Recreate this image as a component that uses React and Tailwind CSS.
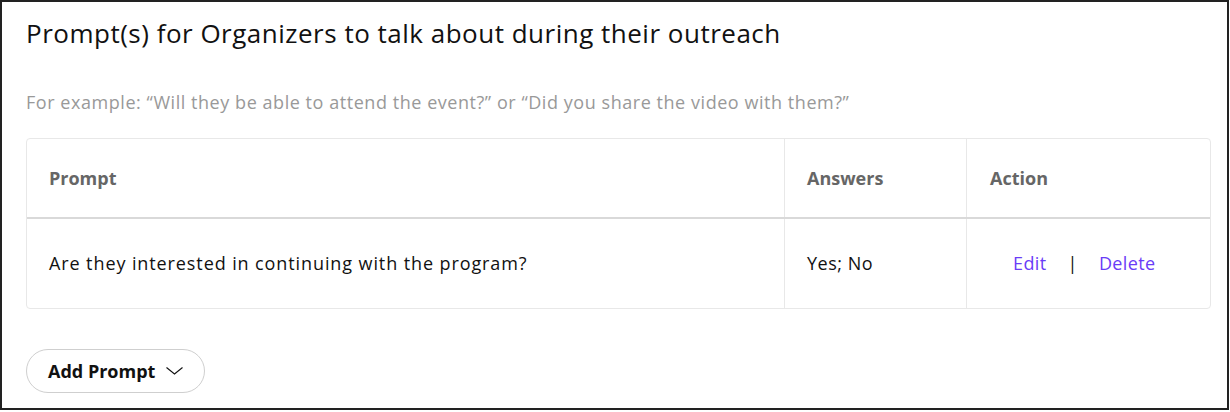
const rows = [
  { prompt: 'Are they interested in continuing with the program?', answers: 'Yes; No' },
];

export default function App() {
  return (
    <div
      className="w-[1229px] h-[410px] border-2 border-[#222] bg-white px-6 text-black"
      style={{ fontFamily: '"Open Sans", "Noto Sans", sans-serif' }}
    >
      <h1 className="pt-[13px] text-[26px] leading-[36px] tracking-[0.5px] font-normal text-[#111]">
        Prompt(s) for Organizers to talk about during their outreach
      </h1>
      <p className="mt-[39px] text-[18px] leading-[24px] tracking-[0.55px] text-[#999]">
        For example: “Will they be able to attend the event?” or “Did you share the video with them?”
      </p>

      <div className="mt-[24px] w-[1185px] rounded border border-[#e8e8e8]">
        <div className="grid grid-cols-[758px_182px_1fr] h-[80px] border-b-2 border-[#d9d9d9] text-[18px] font-bold text-[#666]">
          <div className="flex items-center px-[22px] border-r border-[#e8e8e8]">Prompt</div>
          <div className="flex items-center px-[22px] border-r border-[#e8e8e8]">Answers</div>
          <div className="flex items-center px-[23px]">Action</div>
        </div>
        {rows.map((r) => (
          <div
            key={r.prompt}
            className="grid grid-cols-[758px_182px_1fr] h-[89px] text-[18px] tracking-[0.9px] text-[#111]"
          >
            <div className="flex items-center px-[22px] border-r border-[#e8e8e8]">{r.prompt}</div>
            <div className="flex items-center px-[22px] tracking-[0.5px] border-r border-[#e8e8e8]">{r.answers}</div>
            <div className="flex items-center pl-[46px] tracking-[0.4px] text-[#6a3cf7]">
              <span>Edit</span>
              <span className="mx-[21px] text-[#111]">|</span>
              <span>Delete</span>
            </div>
          </div>
        ))}
      </div>

      <button className="mt-[40px] flex h-[44px] items-center gap-[11px] rounded-full border border-[#cfcfcf] pl-[21px] pr-[21px] text-[18px] font-bold text-[#111]">
        Add Prompt
        <svg width="17" height="8" viewBox="0 0 17 8" fill="none" stroke="#111" strokeWidth="1.1">
          <path d="M0.5 0.5 L8.5 7 L16.5 0.5" />
        </svg>
      </button>
    </div>
  );
}
